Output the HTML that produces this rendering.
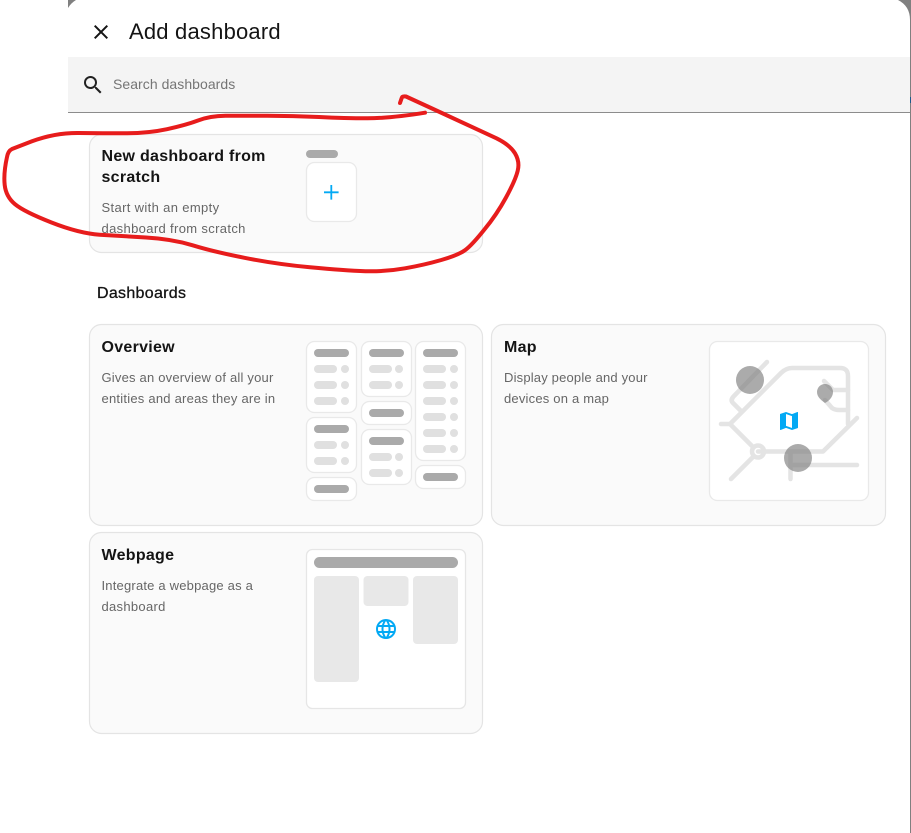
<!DOCTYPE html>
<html lang="en">
<head>
<meta charset="utf-8">
<title>Add dashboard</title>
<style>
html,body{margin:0;padding:0;background:#fff}
body{width:911px;height:833px;position:relative;overflow:hidden;font-family:"Liberation Sans",Arial,sans-serif}
svg.l{position:absolute;left:0;top:0}
.t{position:absolute;white-space:nowrap;margin:0}
.h{font-size:16px;line-height:21px;font-weight:700;color:#141414;letter-spacing:.28px}
.d{font-size:13px;line-height:21px;color:#666;letter-spacing:.3px}
</style>
</head>
<body>
<svg class="l" width="911" height="833" viewBox="0 0 911 833">
  <!-- dialog corners and edge -->
  <path d="M68,0H76Q71,3 68,8Z" fill="#808080"/>
  <path d="M898,0Q910,6 910,20V833H911V0Z" fill="#808080"/>
  <rect x="910" y="97" width="1" height="6" fill="#1c5a8c"/>
  <!-- search -->
  <rect x="68" y="57" width="842" height="55" fill="#f4f4f4"/>
  <rect x="68" y="112" width="842" height="1" fill="#8c8c8c"/>
  <!-- cards -->
  <g fill="#fafafa" stroke="#e4e4e4" stroke-width="1.200">
    <rect x="89.5" y="134.5" width="393" height="118" rx="12"/>
    <rect x="89.5" y="324.5" width="393" height="201" rx="12"/>
    <rect x="491.5" y="324.5" width="394" height="201" rx="12"/>
    <rect x="89.5" y="532.5" width="393" height="201" rx="12"/>
  </g>
  <!-- close + search icons -->
  <path transform="translate(89,20)" fill="#141414" d="M19,6.41L17.59,5L12,10.59L6.41,5L5,6.41L10.59,12L5,17.59L6.41,19L12,13.41L17.59,19L19,17.59L13.41,12L19,6.41Z"/>
  <path transform="translate(81,73)" fill="#212121" d="M9.5,3A6.5,6.5 0 0,1 16,9.5C16,11.11 15.41,12.59 14.44,13.73L14.71,14H15.5L20.5,19L19,20.5L14,15.5V14.71L13.73,14.44C12.59,15.41 11.11,16 9.5,16A6.5,6.5 0 0,1 3,9.5A6.5,6.5 0 0,1 9.5,3M9.5,5C7,5 5,7 5,9.5C5,12 7,14 9.5,14C12,14 14,12 14,9.5C14,7 12,5 9.5,5Z"/>

  <!-- new dashboard preview -->
  <rect x="306" y="150" width="32" height="8" rx="4" fill="#aaa"/>
  <rect x="306.5" y="162.5" width="50" height="59" rx="8" fill="#fff" stroke="#e9e9e9" stroke-width="1.300"/>
  <path transform="translate(319.3,180.3)" fill="#03a9f4" d="M19.300,12.900H12.900V19.300H11.100V12.900H4.700V11.100H11.100V4.700H12.900V11.100H19.300V12.900Z"/>

  <!-- overview preview -->
  <g fill="#fff" stroke="#e9e9e9" stroke-width="1.300">
    <rect x="306.5" y="341.5" width="50" height="71" rx="8"/>
    <rect x="306.5" y="417.5" width="50" height="55" rx="8"/>
    <rect x="306.5" y="477.5" width="50" height="23" rx="8"/>
    <rect x="361.5" y="341.5" width="50" height="55" rx="8"/>
    <rect x="361.5" y="401.5" width="50" height="23" rx="8"/>
    <rect x="361.5" y="429.5" width="50" height="55" rx="8"/>
    <rect x="415.5" y="341.5" width="50" height="119" rx="8"/>
    <rect x="415.5" y="465.5" width="50" height="23" rx="8"/>
  </g>
  <g fill="#aaa">
    <rect x="314" y="349" width="35" height="8" rx="4"/>
    <rect x="314" y="425" width="35" height="8" rx="4"/>
    <rect x="314" y="485" width="35" height="8" rx="4"/>
    <rect x="369" y="349" width="35" height="8" rx="4"/>
    <rect x="369" y="409" width="35" height="8" rx="4"/>
    <rect x="369" y="437" width="35" height="8" rx="4"/>
    <rect x="423" y="349" width="35" height="8" rx="4"/>
    <rect x="423" y="473" width="35" height="8" rx="4"/>
  </g>
  <g fill="#e0e0e0">
    <rect x="314" y="365" width="23" height="8" rx="4"/><circle cx="345" cy="369" r="4"/>
    <rect x="314" y="381" width="23" height="8" rx="4"/><circle cx="345" cy="385" r="4"/>
    <rect x="314" y="397" width="23" height="8" rx="4"/><circle cx="345" cy="401" r="4"/>
    <rect x="314" y="441" width="23" height="8" rx="4"/><circle cx="345" cy="445" r="4"/>
    <rect x="314" y="457" width="23" height="8" rx="4"/><circle cx="345" cy="461" r="4"/>
    <rect x="369" y="365" width="23" height="8" rx="4"/><circle cx="399" cy="369" r="4"/>
    <rect x="369" y="381" width="23" height="8" rx="4"/><circle cx="399" cy="385" r="4"/>
    <rect x="369" y="453" width="23" height="8" rx="4"/><circle cx="399" cy="457" r="4"/>
    <rect x="369" y="469" width="23" height="8" rx="4"/><circle cx="399" cy="473" r="4"/>
    <rect x="423" y="365" width="23" height="8" rx="4"/><circle cx="454" cy="369" r="4"/>
    <rect x="423" y="381" width="23" height="8" rx="4"/><circle cx="454" cy="385" r="4"/>
    <rect x="423" y="397" width="23" height="8" rx="4"/><circle cx="454" cy="401" r="4"/>
    <rect x="423" y="413" width="23" height="8" rx="4"/><circle cx="454" cy="417" r="4"/>
    <rect x="423" y="429" width="23" height="8" rx="4"/><circle cx="454" cy="433" r="4"/>
    <rect x="423" y="445" width="23" height="8" rx="4"/><circle cx="454" cy="449" r="4"/>
  </g>

  <!-- map preview -->
  <rect x="709.5" y="341.5" width="159" height="159" rx="8" fill="#fff" stroke="#e9e9e9" stroke-width="1.300"/>
  <g fill="none" stroke="#e4e4e4" stroke-width="4.500" stroke-linecap="round" stroke-linejoin="round">
    <path d="M767,362L734,396Q730,400 733,403L741,411"/>
    <path d="M721,424H730L781,373Q786,368 792,368H840Q848,368 848,376V424"/>
    <path d="M857,418L823,451.500H758"/>
    <path d="M730,424L753,447"/>
    <path d="M731,479L753,457"/>
    <circle cx="758" cy="451.500" r="6"/>
    <path d="M790.500,479V452"/>
    <path d="M790.500,465H857"/>
    <path d="M824,381L833,390H848"/>
    <path d="M825,400L832,408Q835,410 839,410H848"/>
  </g>
  <circle cx="750" cy="380" r="14" fill="#808080" fill-opacity=".66"/>
  <circle cx="798" cy="458" r="14" fill="#808080" fill-opacity=".66"/>
  <path d="M825,384C830,384 833,388 833,392C833,397 829,401 825,403C821,400 817,397 817,392C817,388 820,384 825,384Z" fill="#808080" fill-opacity=".66"/>
  <path transform="translate(777,409)" fill="#03a9f4" d="M15,19L9,16.89V5L15,7.11M20.5,3C20.44,3 20.39,3 20.34,3L15,5.1L9,3L3.36,4.9C3.15,4.97 3,5.15 3,5.38V20.5A0.5,0.5 0 0,0 3.5,21C3.55,21 3.61,21 3.66,20.97L9,18.9L15,21L20.64,19.1C20.85,19 21,18.85 21,18.62V3.5A0.5,0.5 0 0,0 20.5,3Z"/>

  <!-- webpage preview -->
  <rect x="306.500" y="549.500" width="159" height="159" rx="6" fill="#fff" stroke="#e6e6e6" stroke-width="1.300"/>
  <rect x="314" y="557" width="144" height="11" rx="5.500" fill="#aaa"/>
  <g fill="#e8e8e8">
    <rect x="314" y="576" width="45" height="106" rx="4"/>
    <rect x="363.500" y="576" width="45" height="30" rx="4"/>
    <rect x="413" y="576" width="45" height="68" rx="4"/>
  </g>
  <path transform="translate(374,617)" fill="#03a9f4" d="M16.36,14C16.44,13.34 16.5,12.68 16.5,12C16.5,11.32 16.44,10.66 16.36,10H19.74C19.9,10.64 20,11.31 20,12C20,12.69 19.9,13.36 19.74,14M14.59,19.56C15.19,18.45 15.65,17.25 15.97,16H18.92C17.96,17.65 16.43,18.93 14.59,19.56M14.34,14H9.66C9.56,13.34 9.5,12.68 9.5,12C9.5,11.32 9.56,10.65 9.66,10H14.34C14.43,10.65 14.5,11.32 14.5,12C14.5,12.68 14.43,13.34 14.34,14M12,19.96C11.17,18.76 10.5,17.43 10.09,16H13.91C13.5,17.43 12.83,18.76 12,19.96M8,8H5.08C6.03,6.34 7.57,5.06 9.4,4.44C8.8,5.55 8.35,6.75 8,8M5.08,16H8C8.35,17.25 8.8,18.45 9.4,19.56C7.57,18.93 6.03,17.65 5.08,16M4.26,14C4.1,13.36 4,12.69 4,12C4,11.31 4.1,10.64 4.26,10H7.64C7.56,10.66 7.5,11.32 7.5,12C7.5,12.68 7.56,13.34 7.64,14M12,4.03C12.83,5.23 13.5,6.57 13.91,8H10.09C10.5,6.57 11.17,5.23 12,4.03M18.92,8H15.97C15.65,6.75 15.19,5.55 14.59,4.44C16.43,5.07 17.96,6.34 18.92,8M12,2C6.47,2 2,6.5 2,12A10,10 0 0,0 12,22A10,10 0 0,0 22,12A10,10 0 0,0 12,2Z"/>
</svg>

<div class="t" style="left:129px;top:17px;font-size:22px;line-height:30px;color:#141414;letter-spacing:.2px">Add dashboard</div>
<div class="t" style="left:113px;top:74px;font-size:14px;line-height:20px;color:#757575;letter-spacing:.05px">Search dashboards</div>

<div class="t h" style="left:101.500px;top:146px">New dashboard from<br>scratch</div>
<div class="t d" style="left:101.500px;top:197px"><span style="letter-spacing:.35px">Start with an empty</span><br><span style="letter-spacing:.35px">dashboard from scratch</span></div>

<div class="t" style="left:97px;top:284px;font-size:16px;line-height:20px;color:#141414;letter-spacing:.3px;-webkit-text-stroke:.3px #141414">Dashboards</div>

<div class="t h" style="left:101.500px;top:337px">Overview</div>
<div class="t d" style="left:101.500px;top:367px"><span style="letter-spacing:.2px">Gives an overview of all your</span><br><span style="letter-spacing:.23px">entities and areas they are in</span></div>

<div class="t h" style="left:504px;top:337px">Map</div>
<div class="t d" style="left:504px;top:367px"><span style="letter-spacing:.18px">Display people and your</span><br><span style="letter-spacing:.2px">devices on a map</span></div>

<div class="t h" style="left:101.500px;top:545px">Webpage</div>
<div class="t d" style="left:101.500px;top:575px"><span style="letter-spacing:.2px">Integrate a webpage as a</span><br><span style="letter-spacing:.3px">dashboard</span></div>

<svg class="l" width="911" height="833" viewBox="0 0 911 833" style="pointer-events:none">
  <path fill="none" stroke="#e71c1c" stroke-width="4" stroke-linecap="round" stroke-linejoin="round" d="M425,112.700Q390,118.300 367.500,118.300Q345,118.300 319,117Q293,115.700 267,115.700Q241,115.700 225.500,115.800Q210,116 198,120.500Q186,125 167,129.200Q148,133.300 125.500,133.300Q103,133.300 79,133Q55,132.700 32,141.300L12,149Q8,151 7,157Q3.400,173.300 4.700,185Q6,196.700 15,204.200Q24,211.700 51.500,222.500Q79,233.300 99.700,234.700Q120.500,236 146,237.500Q172,239 192.700,245.300Q213.500,251.700 244.500,257.800Q275.500,264 310,267.300Q345,270.700 365.500,271.200Q386,271.700 405,268.300Q424,265 441.300,260Q458.600,255 465.300,250Q472,245 484,230Q496.500,215 506,197.500Q515.500,180 517.700,170.800Q520,161.700 515,153.300Q510,145 496.500,138.300L431,108L406,96.500Q402,96 401.700,98L400,103"/>
</svg>
</body>
</html>
